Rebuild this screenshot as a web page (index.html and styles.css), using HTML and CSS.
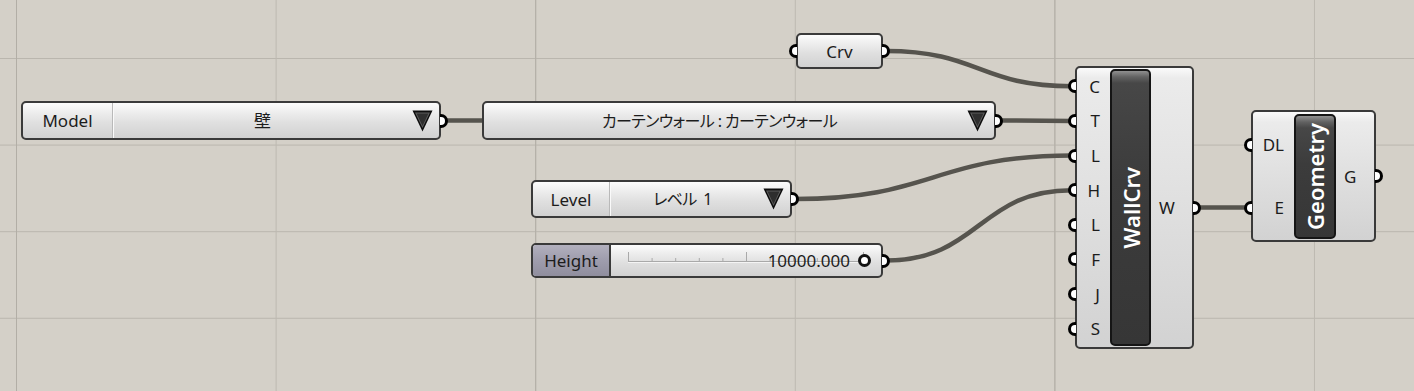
FILE: index.html
```html
<!DOCTYPE html>
<html lang="ja">
<head>
<meta charset="utf-8">
<title>Grasshopper canvas</title>
<link rel="stylesheet" href="styles.css">
</head>
<body>
<div class="canvas">
  <svg class="wires" width="1414" height="391" viewBox="0 0 1414 391">
    <path d="M444 120.5 L484 120.5"/>
    <path d="M886 51 C979 51 979 86.3 1072 86.3"/>
    <path d="M999 120.5 L1072 120.9"/>
    <path d="M795 199 C933 199 934 155.6 1072 155.6"/>
    <path d="M886 260.5 C979 260.5 979 190.2 1072 190.2"/>
    <path d="M1197 207.5 L1248 207.5"/>
  </svg>

  <div class="node n-crv">
    <span class="grip in"></span>
    <span class="label">Crv</span>
    <span class="grip out"></span>
  </div>

  <div class="node n-model">
    <div class="dd-label">Model</div>
    <div class="dd-value">壁</div>
    <svg class="tri" width="21" height="22" viewBox="0 0 21 22"><polygon class="tri-o" points="0.5,0.5 20.5,0.5 10.5,21.5"/><polygon class="tri-m" points="3,2.5 18,2.5 10.5,18"/><polygon class="tri-i" points="4.5,3.5 16.5,3.5 10.5,16"/></svg>
    <span class="grip out"></span>
  </div>

  <div class="node n-curtain">
    <div class="dd-value jp">カーテンウォール : カーテンウォール</div>
    <svg class="tri" width="21" height="22" viewBox="0 0 21 22"><polygon class="tri-o" points="0.5,0.5 20.5,0.5 10.5,21.5"/><polygon class="tri-m" points="3,2.5 18,2.5 10.5,18"/><polygon class="tri-i" points="4.5,3.5 16.5,3.5 10.5,16"/></svg>
    <span class="grip out"></span>
  </div>

  <div class="node n-level">
    <div class="dd-label">Level</div>
    <div class="dd-value jp">レベル 1</div>
    <svg class="tri" width="21" height="22" viewBox="0 0 21 22"><polygon class="tri-o" points="0.5,0.5 20.5,0.5 10.5,21.5"/><polygon class="tri-m" points="3,2.5 18,2.5 10.5,18"/><polygon class="tri-i" points="4.5,3.5 16.5,3.5 10.5,16"/></svg>
    <span class="grip out"></span>
  </div>

  <div class="node n-height">
    <div class="sl-label">Height</div>
    <div class="sl-body">
      <svg class="ticks" width="270" height="31" viewBox="0 0 270 31">
        <path class="track-hi" d="M17 17.5 H253"/>
        <path class="track" d="M17 16.5 H253 M17.5 7 V16 M41.1 13 V16 M64.7 13 V16 M88.3 13 V16 M111.9 13 V16 M135.5 7 V16 M159.1 13 V16 M182.7 13 V16 M206.3 13 V16 M229.9 13 V16 M252.5 7 V16"/>
      </svg>
      <span class="sl-value">10000.000</span>
      <span class="knob"></span>
    </div>
    <span class="grip out"></span>
  </div>

  <div class="comp n-wall">
    <div class="ports inputs">
      <div class="port"><span class="grip in"></span>C</div>
      <div class="port"><span class="grip in"></span>T</div>
      <div class="port"><span class="grip in"></span>L</div>
      <div class="port"><span class="grip in"></span>H</div>
      <div class="port"><span class="grip in"></span>L</div>
      <div class="port"><span class="grip in"></span>F</div>
      <div class="port"><span class="grip in"></span>J</div>
      <div class="port"><span class="grip in"></span>S</div>
    </div>
    <div class="bar"><span>WallCrv</span></div>
    <div class="ports outputs">
      <div class="port"><span class="grip out"></span>W</div>
    </div>
  </div>

  <div class="comp n-geo">
    <div class="ports inputs">
      <div class="port"><span class="grip in"></span>DL</div>
      <div class="port"><span class="grip in"></span>E</div>
    </div>
    <div class="bar"><span>Geometry</span></div>
    <div class="ports outputs">
      <div class="port"><span class="grip out"></span>G</div>
    </div>
  </div>
</div>
</body>
</html>
```

FILE: styles.css
```css
* { box-sizing: border-box; }

body {
  margin: 0;
  background: #d4d0c8;
  font-family: "Noto Sans", "Noto Sans CJK JP", sans-serif;
  color: #1c1c1c;
}

.canvas {
  position: relative;
  width: 1414px;
  height: 391px;
  overflow: hidden;
  background-color: #d4d0c8;
  background-image:
    linear-gradient(to right, #b2aea6 1px, transparent 1px),
    linear-gradient(to right, #bdb9b1 1px, transparent 1px),
    linear-gradient(to bottom, #bab6ae 1px, transparent 1px);
  background-size: 519.2px 100%, 259.6px 100%, 100% 86.6px;
  background-position: 16px 0, 16px 0, 0 58px;
}

.wires {
  position: absolute;
  left: 0;
  top: 0;
}
.wires path {
  fill: none;
  stroke: #56544e;
  stroke-width: 4.5;
}

/* parameter nodes */
.node {
  position: absolute;
  display: flex;
  align-items: center;
  border: 2px solid #3a3a3a;
  border-radius: 5px;
  background: linear-gradient(to bottom, #fcfcfc 0%, #f0f0f0 22%, #e0e0e0 55%, #d1d1d1 100%);
  font-size: 17px;
  line-height: 1;
}

.n-crv { left: 796px; top: 33px; width: 87px; height: 36px; justify-content: center; }
.n-model { left: 21px; top: 101px; width: 420px; height: 39px; }
.n-curtain { left: 482px; top: 101px; width: 514px; height: 39px; }
.n-level { left: 531px; top: 180px; width: 261px; height: 38px; }
.n-height { left: 531px; top: 243px; width: 352px; height: 35px; }

.dd-label {
  align-self: stretch;
  display: flex;
  align-items: center;
  justify-content: center;
  border-right: 1px solid #b9b9b9;
  box-shadow: 1px 0 0 #fafafa;
}
.n-model .dd-label { width: 90px; }
.n-level .dd-label { width: 77px; }

.dd-value {
  flex: 1;
  text-align: center;
  font-feature-settings: "palt";
}
.dd-value.jp {
  font-size: 16px;
  letter-spacing: -0.6px;
}
.n-curtain .dd-value { padding-right: 12px; }
.n-level .dd-value { padding-right: 8px; word-spacing: 3px; }

.tri { flex: none; margin-right: 6px; }
.tri-o { fill: #0c0c0c; }
.tri-m { fill: #5e5e5e; }
.tri-i { fill: #2e2e2e; }

/* slider */
.sl-label {
  align-self: stretch;
  width: 78px;
  display: flex;
  align-items: center;
  justify-content: center;
  background: linear-gradient(to bottom, #b2b0be 0%, #a09eae 45%, #908e9e 100%);
  border-right: 2px solid #3a3a3a;
  border-radius: 3px 0 0 3px;
}
.sl-body {
  flex: 1;
  align-self: stretch;
  position: relative;
  display: flex;
  align-items: center;
  justify-content: flex-end;
  padding-right: 10px;
}
.ticks { position: absolute; left: 0; top: 0; }
.track { fill: none; stroke: #a9a9a9; stroke-width: 1; }
.track-hi { fill: none; stroke: #f4f4f4; stroke-width: 1; }
.sl-value { position: relative; margin-right: 8px; }
.knob {
  position: relative;
  width: 13px;
  height: 13px;
  border: 3px solid #111;
  border-radius: 50%;
  background: #fff;
}

/* grips */
.grip {
  position: absolute;
  top: 50%;
  width: 8px;
  height: 14px;
  margin-top: -7px;
  border: 3px solid #000;
  background: #fff;
}
.grip.in {
  right: calc(100% + 1px);
  border-right: none;
  border-radius: 8px 0 0 8px;
}
.grip.out {
  left: calc(100% + 1px);
  border-left: none;
  border-radius: 0 8px 8px 0;
}

/* components */
.comp {
  position: absolute;
  display: flex;
  border: 2px solid #3a3a3a;
  border-radius: 5px;
  background: linear-gradient(to bottom, #fafafa 0px, #ebebeb 10px, #dedede 55%, #d2d2d2 100%);
  font-size: 17px;
  line-height: 1;
}
.n-wall { left: 1075px; top: 66px; width: 119px; height: 283px; }
.n-geo { left: 1251px; top: 110px; width: 125px; height: 132px; }

.ports {
  display: flex;
  flex-direction: column;
  padding: 1px 0;
}
.inputs { width: 33px; }
.n-geo .inputs { width: 41px; }
.outputs { flex: 1; justify-content: center; }

.port {
  position: relative;
  display: flex;
  align-items: center;
}
.inputs .port {
  flex: 1;
  justify-content: flex-end;
  padding-right: 10px;
}
.outputs .port {
  height: 30px;
  padding-left: 8px;
}

.bar {
  width: 41px;
  margin: 1px 0;
  border: 2px solid #151515;
  border-radius: 5px;
  background: linear-gradient(to bottom, #909090 0px, #626262 6px, #474747 12px, #3c3c3c 40%, #363636 100%);
  display: flex;
  align-items: center;
  justify-content: center;
  color: #ffffff;
  font-size: 22px;
  font-weight: 600;
}
.n-geo .bar { width: 42px; margin: 2px 0 1px; }
.bar span {
  writing-mode: vertical-rl;
  transform: rotate(180deg);
  line-height: 1;
}
```
